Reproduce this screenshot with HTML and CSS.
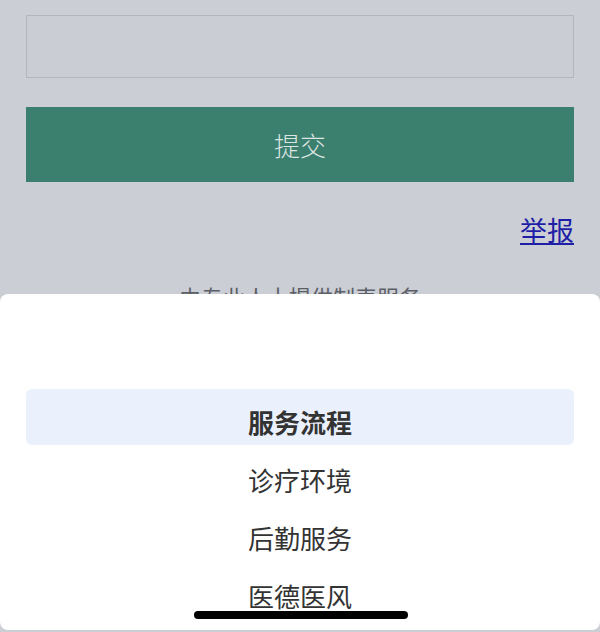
FILE: index.html
```html
<!DOCTYPE html>
<html lang="zh-CN">
<head>
    <meta charset="UTF-8">
    <meta name="viewport" content="width=device-width, initial-scale=1.0">
    <title>提交</title>
    <link rel="stylesheet" href="styles.css">
</head>
<body>
    <div class="container">
        <div class="field"></div>
        <button class="submit-btn" type="button">提交</button>
        <div class="report">
            <a href="#">举报</a>
        </div>
        <p class="note">由专业人士提供制表服务</p>
    </div>

    <div class="sheet">
        <ul class="menu">
            <li class="menu-item active">服务流程</li>
            <li class="menu-item">诊疗环境</li>
            <li class="menu-item">后勤服务</li>
            <li class="menu-item">医德医风</li>
        </ul>
        <div class="home-bar"></div>
    </div>
</body>
</html>
```

FILE: styles.css
```css
body {
    margin: 0;
    height: 632px;
    overflow: hidden;
    background: #cbced5;
    font-family: "Noto Sans CJK SC", "Noto Sans", sans-serif;
    color: #333;
}

.container {
    padding: 15px 26px 0;
}

.field {
    height: 61px;
    border: 1px solid #b3b6bd;
    background: #cacdd4;
}

.submit-btn {
    display: block;
    width: 100%;
    height: 75px;
    margin-top: 29px;
    border: none;
    background: #3b7f6f;
    color: #dde5e2;
    font-family: inherit;
    font-size: 26px;
    font-weight: 300;
}

.report {
    margin-top: 30px;
    text-align: right;
}

.report a {
    color: #1e1ea6;
    font-size: 27px;
    line-height: 36px;
}

.note {
    margin: 32px 0 0;
    text-align: center;
    font-size: 22px;
    color: #5c5f66;
}

.sheet {
    position: fixed;
    left: 0;
    right: 0;
    top: 294px;
    bottom: 2px;
    background: #fff;
    border-radius: 8px;
}

.menu {
    list-style: none;
    margin: 0;
    padding: 95px 26px 0;
}

.menu-item {
    height: 48px;
    padding-top: 10px;
    line-height: 46px;
    text-align: center;
    font-size: 26px;
    color: #333;
}

.menu-item.active {
    height: 46px;
    margin-bottom: 2px;
    background: #ebf1fc;
    border-radius: 6px;
    font-weight: bold;
}

.home-bar {
    position: absolute;
    left: 194px;
    top: 317px;
    width: 214px;
    height: 8px;
    border-radius: 4px;
    background: #000;
}
```
